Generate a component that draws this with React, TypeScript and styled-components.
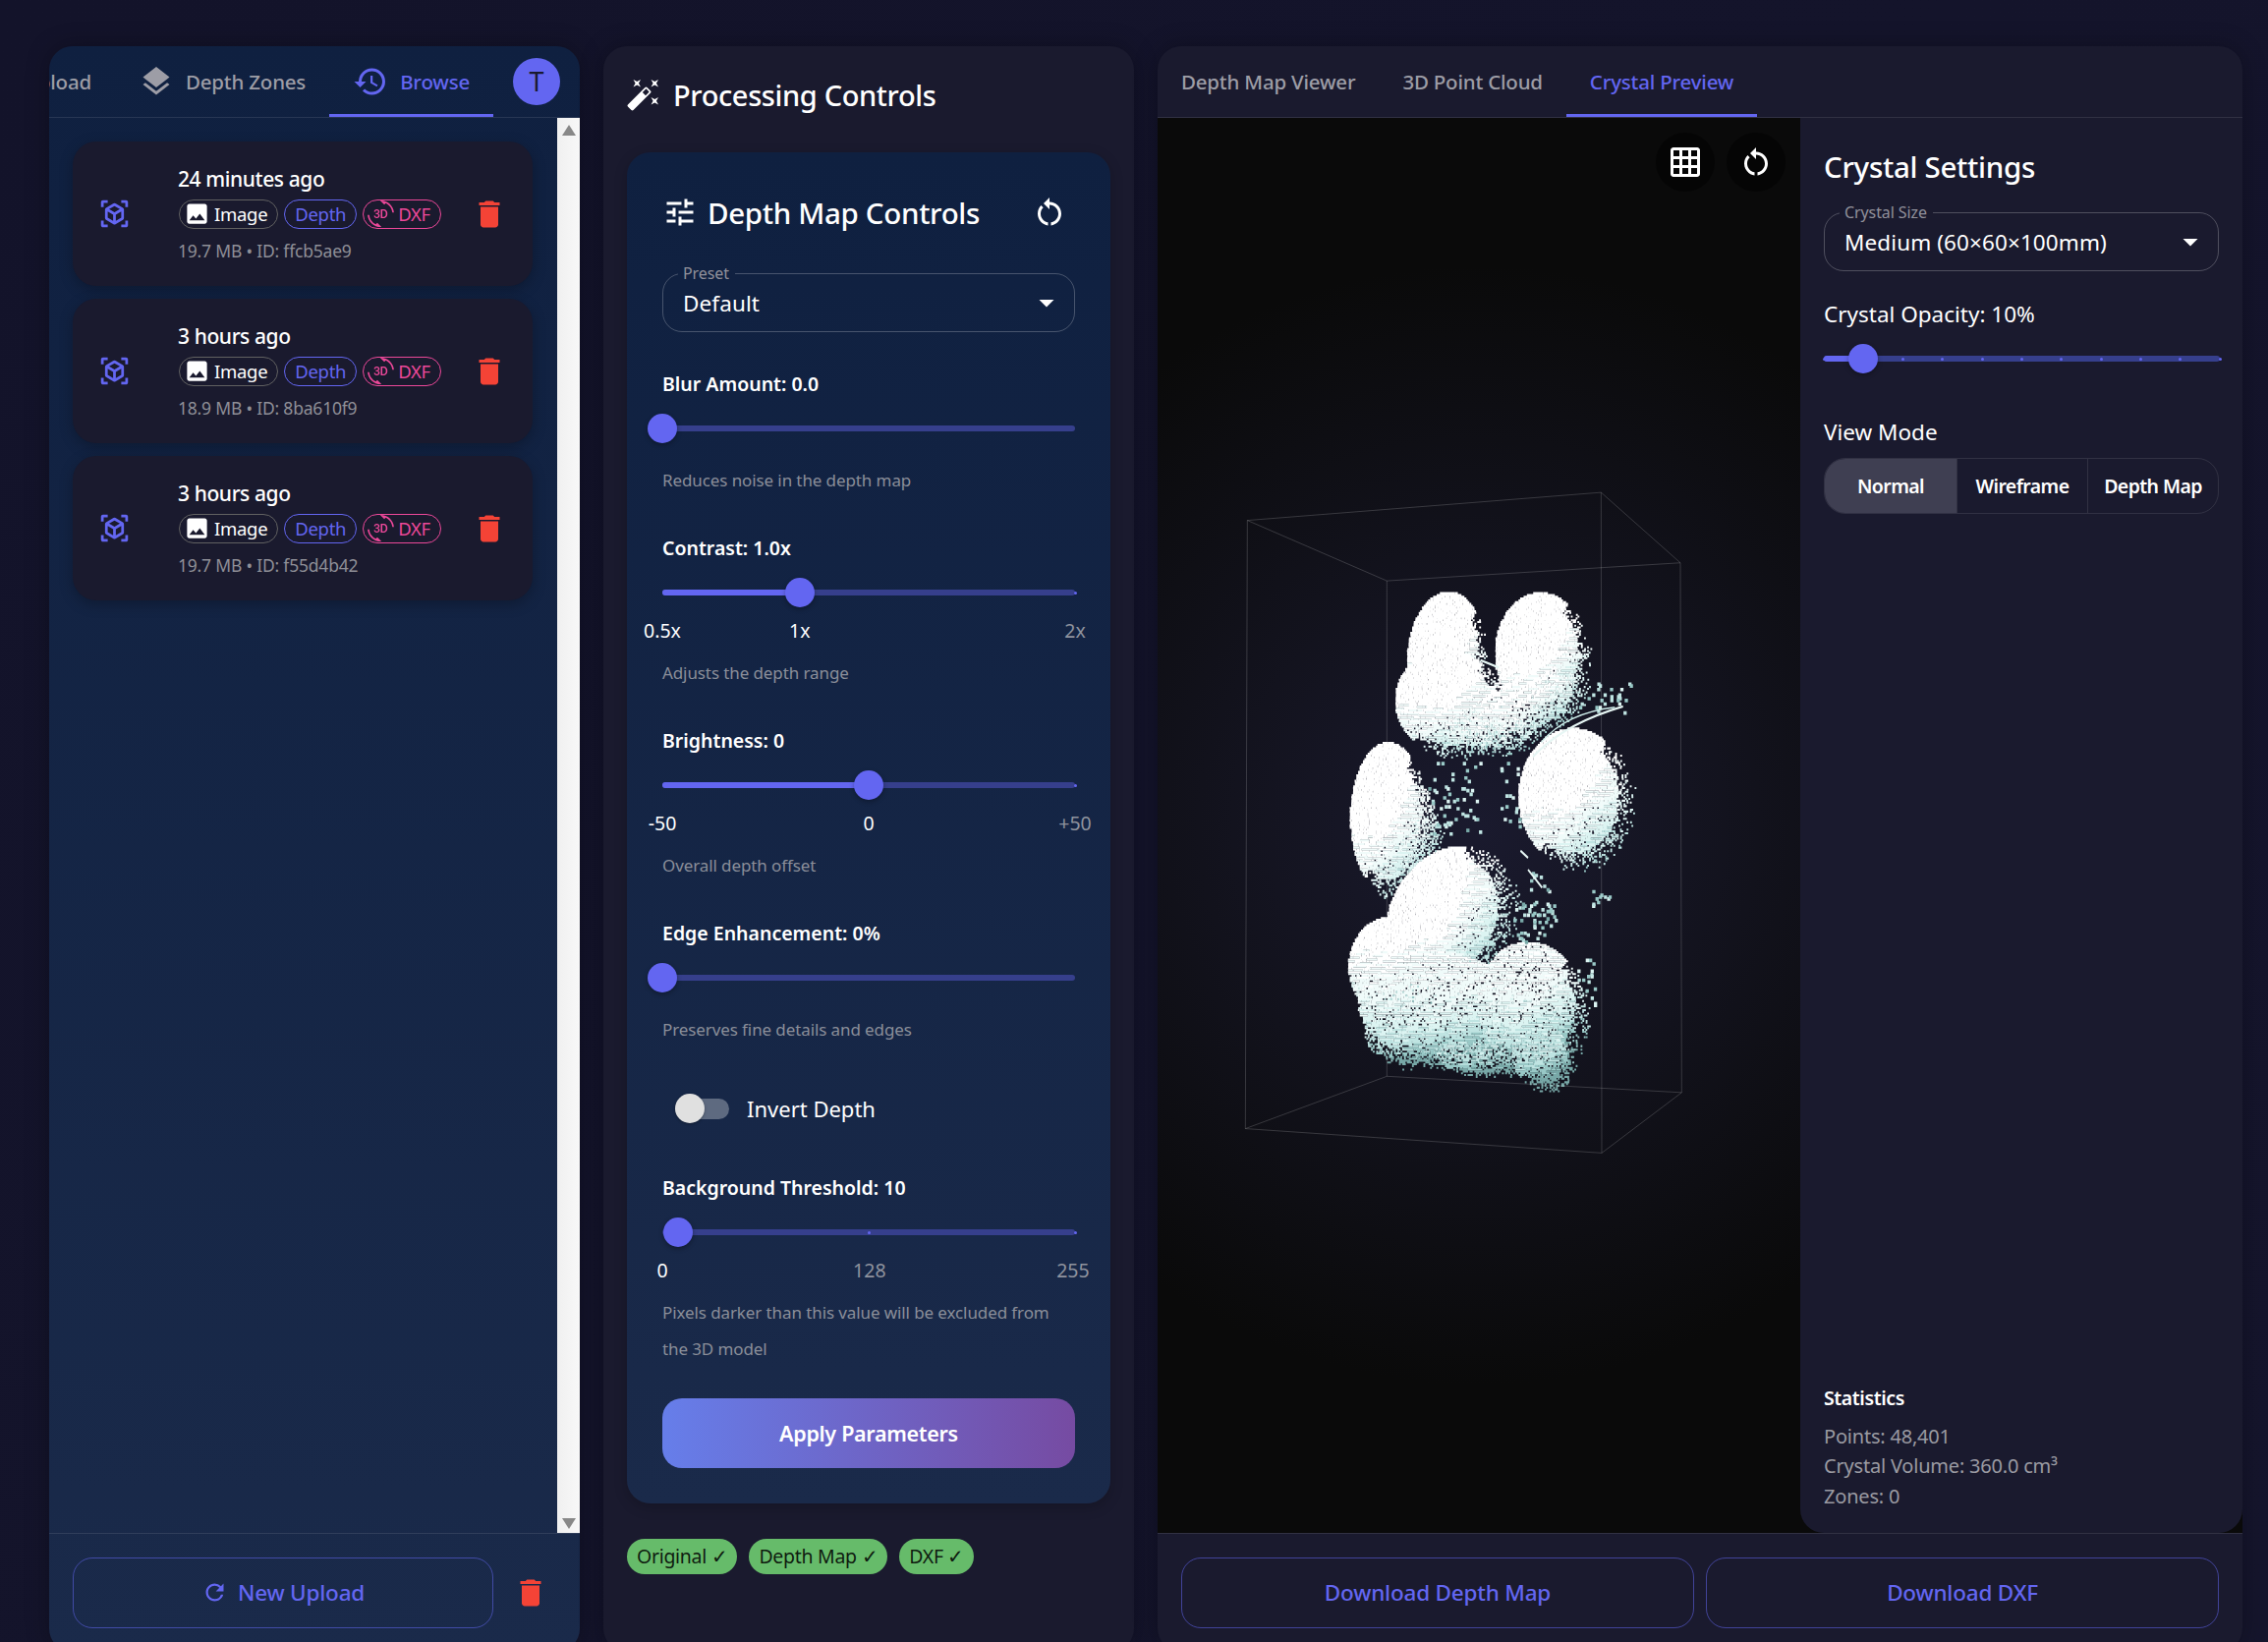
import styled, { createGlobalStyle } from 'styled-components';
import {
  Md3dRotation,
  MdArrowDropDown,
  MdAutoFixHigh,
  MdDelete,
  MdGridOn,
  MdHistory,
  MdImage,
  MdLayers,
  MdRefresh,
  MdRestartAlt,
  MdTune,
  MdViewInAr,
} from 'react-icons/md';

const GlobalStyle = createGlobalStyle`
  html, body {
    margin: 0;
    padding: 0;
    background: #14142a;
    overflow: hidden;
  }
  * {
    box-sizing: border-box;
  }
  body {
    font-family: "Noto Sans", "Open Sans", sans-serif;
    color: #fff;
  }
`;

const Page = styled.div`
  width: 2308px;
  height: 1671px;
  overflow: hidden;
  padding: 47px 26px 0 50px;
  display: flex;
  gap: 24px;
  align-items: flex-start;
  background: linear-gradient(135deg, #13132a 0%, #15152c 100%);
`;

const Panel = styled.section<{ $width: number; $navy?: boolean }>`
  width: ${(p) => p.$width}px;
  flex: none;
  height: 1634px;
  border-radius: 24px;
  overflow: hidden;
  display: flex;
  flex-direction: column;
  box-shadow: 0 0 24px rgba(0, 0, 0, 0.28);
  background: ${(p) => (p.$navy ? 'linear-gradient(180deg, #0f2040 0%, #1a2a4a 100%)' : '#1a1a2e')};
`;

const TabBar = styled.div`
  height: 73px;
  flex: none;
  display: flex;
  align-items: stretch;
  border-bottom: 1px solid rgba(255, 255, 255, 0.1);
`;

const TabStrip = styled.div<{ $end?: boolean }>`
  flex: 1;
  min-width: 0;
  display: flex;
  overflow: hidden;
  justify-content: ${(p) => (p.$end ? 'flex-end' : 'flex-start')};
`;

const Tab = styled.div<{ $active?: boolean }>`
  flex: none;
  height: 72px;
  padding: 3px 24px 0;
  display: flex;
  align-items: center;
  gap: 12px;
  font-size: 20.5px;
  font-weight: 500;
  letter-spacing: -0.2px;
  color: ${(p) => (p.$active ? '#6366f1' : '#9d9da6')};
  border-bottom: 3px solid ${(p) => (p.$active ? '#6366f1' : 'transparent')};
  svg {
    font-size: 36px;
  }
`;

const Avatar = styled.div`
  width: 48px;
  height: 48px;
  flex: none;
  margin: 12px 20px 0;
  border-radius: 50%;
  background: #6366f1;
  color: #1a1a2e;
  font-size: 27px;
  line-height: 48px;
  text-align: center;
`;

const BrowseBody = styled.div`
  flex: 1;
  min-height: 0;
  display: flex;
`;

const FileList = styled.div`
  flex: 1;
  padding: 24px 25px 0 24px;
  display: flex;
  flex-direction: column;
  gap: 13px;
`;

const FileCard = styled.div`
  height: 147px;
  flex: none;
  border-radius: 24px;
  background: #1a1a2e;
  box-shadow: 0 4px 14px rgba(0, 0, 0, 0.25);
  display: flex;
  align-items: center;
  padding: 0 26px;
`;

const FileIcon = styled(MdViewInAr)`
  flex: none;
  font-size: 33px;
  color: #6366f1;
  margin-right: 48px;
`;

const FileInfo = styled.div`
  flex: 1;
  min-width: 0;
`;

const FileTitle = styled.div`
  font-size: 21px;
  font-weight: 500;
  line-height: 30px;
  letter-spacing: -0.4px;
  margin-bottom: 6px;
`;

const ChipRow = styled.div`
  display: flex;
  gap: 6px;
  margin-left: 1px;
`;

const Chip = styled.span<{ $color: string }>`
  height: 30px;
  padding: 0 10px;
  display: inline-flex;
  align-items: center;
  gap: 4px;
  border-radius: 15px;
  font-size: 18.5px;
  letter-spacing: -0.3px;
  color: ${(p) => p.$color};
  border: 1px solid ${(p) => (p.$color === '#ffffff' ? '#616161' : p.$color)};
  svg {
    font-size: 27px;
    margin-left: -6px;
  }
`;

const FileMeta = styled.div`
  margin-top: 8px;
  font-size: 17.5px;
  line-height: 28px;
  letter-spacing: -0.2px;
  color: #8f8f97;
`;

const TrashButton = styled(MdDelete)`
  flex: none;
  font-size: 36px;
  color: #f44336;
`;

const Scrollbar = styled.div`
  width: 23px;
  flex: none;
  background: linear-gradient(90deg, #f0f0f0, #f8f8f8);
  display: flex;
  flex-direction: column;
  justify-content: space-between;
  align-items: center;
  padding: 7px 0 4px;
`;

const ScrollArrow = styled.div<{ $down?: boolean }>`
  width: 0;
  height: 0;
  border-left: 7px solid transparent;
  border-right: 7px solid transparent;
  ${(p) => (p.$down ? 'border-top: 11px solid #888;' : 'border-bottom: 11px solid #888;')}
`;

const Footer = styled.div<{ $trash?: boolean }>`
  height: 121px;
  flex: none;
  padding: 24px ${(p) => (p.$trash ? '32px' : '24px')} 25px 24px;
  border-top: 1px solid rgba(255, 255, 255, 0.1);
  display: flex;
  align-items: center;
  gap: ${(p) => (p.$trash ? '20px' : '12px')};
`;

const OutlineButton = styled.div`
  flex: 1;
  height: 72px;
  border: 1px solid rgba(99, 102, 241, 0.55);
  border-radius: 20px;
  color: #6366f1;
  font-size: 22.5px;
  font-weight: 500;
  letter-spacing: -0.2px;
  display: flex;
  align-items: center;
  justify-content: center;
  gap: 10px;
  svg {
    font-size: 27px;
  }
`;

const MiddleBody = styled.div`
  padding: 31px 24px 0;
`;

const PanelTitle = styled.h2`
  margin: 0 0 41px;
  height: 36px;
  display: flex;
  align-items: center;
  gap: 12px;
  font-size: 29px;
  font-weight: 500;
  letter-spacing: -0.37px;
  svg {
    font-size: 36px;
    margin-left: -1px;
  }
`;

const ControlsCard = styled.div`
  height: 1375px;
  border-radius: 24px;
  padding: 41px 36px 36px;
  background: linear-gradient(180deg, #0f2040 0%, #1a2a4a 100%);
  box-shadow: 0 4px 14px rgba(0, 0, 0, 0.2);
`;

const CardHeader = styled.div`
  height: 40px;
  display: flex;
  align-items: center;
  gap: 10px;
  font-size: 29.5px;
  font-weight: 500;
  letter-spacing: -0.33px;
  margin-bottom: 32px;
  svg {
    font-size: 36px;
    flex: none;
  }
`;

const HeaderSpacer = styled.span`
  flex: 1;
`;

const ResetIcon = styled(MdRestartAlt)`
  margin-right: 8px;
`;

const SelectBox = styled.fieldset`
  margin: 0;
  padding: 0 11px 9px 20px;
  border: 1px solid rgba(255, 255, 255, 0.23);
  border-radius: 20px;
  min-width: 0;
  display: flex;
  align-items: center;
  justify-content: space-between;
`;

const SelectLegend = styled.legend`
  margin-left: -5px;
  padding: 0 6px 0 5px;
  font-size: 16px;
  line-height: 20px;
  letter-spacing: -0.1px;
  color: #90909a;
`;

const SelectValue = styled.div`
  height: 40px;
  line-height: 42px;
  font-size: 22.5px;
  letter-spacing: 0.1px;
`;

const CaretIcon = styled(MdArrowDropDown)`
  font-size: 36px;
  margin-right: -1px;
`;

const ControlGroup = styled.div<{ $first?: boolean }>`
  margin-top: ${(p) => (p.$first ? '39px' : '37px')};
`;

const ControlLabel = styled.div`
  height: 28px;
  line-height: 28px;
  font-size: 19.5px;
  font-weight: 600;
  letter-spacing: 0;
`;

const SliderRoot = styled.div<{ $marked?: boolean }>`
  position: relative;
  height: 30px;
  margin-top: 16px;
  margin-bottom: ${(p) => (p.$marked ? '49px' : '20px')};
`;

const SliderRail = styled.div`
  position: absolute;
  left: 0;
  right: 0;
  top: 12px;
  height: 6px;
  border-radius: 3px;
  background: #363f8c;
`;

const SliderFill = styled.div`
  position: absolute;
  left: 0;
  top: 12px;
  height: 6px;
  border-radius: 3px;
  background: #6366f1;
`;

const SliderThumb = styled.div`
  position: absolute;
  top: 0;
  width: 30px;
  height: 30px;
  margin-left: -15px;
  border-radius: 50%;
  background: #6366f1;
  box-shadow: 0 2px 5px rgba(0, 0, 0, 0.3);
`;

const SliderDot = styled.div`
  position: absolute;
  top: 13.5px;
  width: 3px;
  height: 3px;
  margin-left: -1.5px;
  border-radius: 50%;
  background: #6366f1;
`;

const SliderMark = styled.div<{ $on?: boolean }>`
  position: absolute;
  top: 42px;
  transform: translateX(-50%);
  font-size: 19.5px;
  line-height: 24px;
  color: ${(p) => (p.$on ? '#ffffff' : '#8f939e')};
`;

const HelpText = styled.div`
  font-size: 17px;
  line-height: 36px;
  letter-spacing: -0.1px;
  color: #8a8e99;
  & + & {
    margin-top: 1px;
  }
`;

const InvertRow = styled.div`
  height: 40px;
  margin-top: 42px;
  margin-bottom: 47px;
  padding-left: 13px;
  display: flex;
  align-items: center;
  gap: 18px;
  font-size: 22px;
`;

const ToggleTrack = styled.div`
  position: relative;
  width: 55px;
  height: 21px;
  border-radius: 11px;
  background: #5e6a80;
`;

const ToggleKnob = styled.div`
  position: absolute;
  left: 0;
  top: -4.5px;
  width: 30px;
  height: 30px;
  border-radius: 50%;
  background: #e0e0e0;
  box-shadow: 0 1px 3px rgba(0, 0, 0, 0.3);
`;

const ApplyButton = styled.div`
  margin-top: 32px;
  height: 71px;
  border-radius: 20px;
  background: linear-gradient(90deg, #667eea 0%, #764ba2 100%);
  display: flex;
  align-items: center;
  justify-content: center;
  font-size: 21.5px;
  font-weight: 600;
  letter-spacing: -0.3px;
`;

const StatusRow = styled.div`
  display: flex;
  gap: 12px;
  margin-top: 36px;
`;

const StatusChip = styled.span`
  height: 36px;
  padding: 0 10px;
  border-radius: 18px;
  background: #66bb6a;
  color: rgba(0, 0, 0, 0.87);
  font-size: 19.5px;
  letter-spacing: -0.3px;
  line-height: 36px;
`;

const PreviewBody = styled.div`
  flex: 1;
  min-height: 0;
  display: flex;
  background: #0a0a0a;
`;

const Viewer = styled.div`
  position: relative;
  flex: 1;
  min-width: 0;
  background: radial-gradient(circle at center, #1a1a2e 0%, #0a0a0a 72%);
`;

const ViewerCanvas = styled.svg`
  display: block;
  width: 100%;
  height: 100%;
`;

const ViewerTools = styled.div`
  position: absolute;
  top: 15px;
  right: 15px;
  display: flex;
  gap: 12px;
`;

const ToolButton = styled.div`
  width: 60px;
  height: 60px;
  border-radius: 50%;
  background: rgba(0, 0, 0, 0.5);
  display: flex;
  align-items: center;
  justify-content: center;
  font-size: 36px;
`;

const SettingsPanel = styled.aside`
  width: 450px;
  flex: none;
  padding: 31px 24px 22px;
  background: #1a1a2e;
  border-radius: 0 0 24px 24px;
  display: flex;
  flex-direction: column;
`;

const SettingsTitle = styled.h3`
  margin: 0 0 17px;
  height: 38px;
  line-height: 38px;
  font-size: 29.5px;
  font-weight: 500;
  letter-spacing: -0.3px;
`;

const SettingsLabel = styled.div<{ $spaced?: boolean }>`
  font-size: 22.5px;
  line-height: 30px;
  margin-top: ${(p) => (p.$spaced ? '29px' : '0')};
`;

const OpacitySlider = styled(SliderRoot)`
  margin-top: 15px;
  margin-right: -1px;
  margin-bottom: 45px;
`;

const ModeGroup = styled.div`
  margin-top: 11px;
  height: 57px;
  display: flex;
  border: 1px solid rgba(255, 255, 255, 0.1);
  border-radius: 22px;
  overflow: hidden;
`;

const ModeButton = styled.div<{ $active?: boolean; $width: number }>`
  width: ${(p) => p.$width}px;
  flex: none;
  display: flex;
  align-items: center;
  justify-content: center;
  font-size: 19.5px;
  font-weight: 600;
  letter-spacing: -0.6px;
  background: ${(p) => (p.$active ? '#3f3f52' : 'transparent')};
  & + & {
    border-left: 1px solid rgba(255, 255, 255, 0.1);
  }
`;

const Statistics = styled.div`
  margin-top: auto;
`;

const StatsTitle = styled.div`
  font-size: 19.5px;
  font-weight: 600;
  line-height: 28px;
  letter-spacing: -0.4px;
  margin-bottom: 10px;
`;

const StatsLine = styled.div`
  font-size: 20px;
  line-height: 30.5px;
  letter-spacing: -0.2px;
  color: #9a9aa2;
`;

// seeded random so the point cloud comes out the same on every render
function makeRandom(seed: number) {
  let a = seed;
  return () => {
    a = (a + 0x6d2b79f5) | 0;
    let t = Math.imul(a ^ (a >>> 15), 1 | a);
    t = (t + Math.imul(t ^ (t >>> 7), 61 | t)) ^ t;
    return ((t ^ (t >>> 14)) >>> 0) / 4294967296;
  };
}

// measured in the crop of the paw: x is 3 units per pixel, y about 2.18
const lobes = [
  { x: 690, y: 400, rx: 115, ry: 138, rot: 14, dark: 0, fill: 1 },
  { x: 700, y: 510, rx: 165, ry: 115, rot: 4, dark: 0.14, fill: 1 },
  { x: 790, y: 545, rx: 110, ry: 75, rot: 0, dark: 0.28, fill: 0.75 },
  { x: 980, y: 400, rx: 140, ry: 135, rot: 0, dark: 0, fill: 1 },
  { x: 950, y: 505, rx: 155, ry: 72, rot: -8, dark: 0.2, fill: 0.85 },
  { x: 870, y: 565, rx: 105, ry: 60, rot: 0, dark: 0.3, fill: 0.6 },
  { x: 515, y: 765, rx: 116, ry: 168, rot: 0, dark: 0.05, fill: 1 },
  { x: 605, y: 800, rx: 70, ry: 105, rot: 0, dark: 0.4, fill: 0.55 },
  { x: 1080, y: 718, rx: 168, ry: 152, rot: 0, dark: 0.08, fill: 1 },
  { x: 695, y: 985, rx: 195, ry: 148, rot: -24, dark: 0.08, fill: 1 },
  { x: 525, y: 1095, rx: 132, ry: 112, rot: 0, dark: 0.1, fill: 1 },
  { x: 690, y: 1190, rx: 270, ry: 125, rot: 5, dark: 0.22, fill: 0.97 },
  { x: 950, y: 1180, rx: 165, ry: 140, rot: 8, dark: 0.2, fill: 0.95 },
  { x: 560, y: 1255, rx: 120, ry: 65, rot: 10, dark: 0.45, fill: 0.6 },
  { x: 985, y: 1295, rx: 95, ry: 72, rot: 10, dark: 0.5, fill: 0.85 },
  { x: 790, y: 1300, rx: 140, ry: 38, rot: 5, dark: 0.55, fill: 0.7 },
];

const sprinkles = [
  { x0: 640, x1: 800, y0: 640, y1: 800, p: 0.06 },
  { x0: 1090, x1: 1260, y0: 465, y1: 535, p: 0.05 },
  { x0: 900, x1: 1030, y0: 950, y1: 1040, p: 0.09 },
  { x0: 1140, x1: 1195, y0: 925, y1: 960, p: 0.1 },
  { x0: 1070, x1: 1160, y0: 1065, y1: 1180, p: 0.03 },
  { x0: 860, x1: 960, y0: 640, y1: 790, p: 0.03 },
  { x0: 940, x1: 1030, y0: 880, y1: 930, p: 0.05 },
];

const cloudColors = ['#ffffff', '#f0fbfa', '#dcf4f2', '#bfe4e2', '#98c8c6', '#78a8a7'];

function buildCloud(): string[] {
  const rand = makeRandom(4821);
  const paths: string[] = cloudColors.map(() => '');
  const stepX = 5;
  const stepY = 4;
  for (let y = 255; y < 1385; y += stepY) {
    for (let x = 385; x < 1285; x += stepX) {
      let keep = false;
      let shade = 1;
      for (const l of lobes) {
        const r = (l.rot * Math.PI) / 180;
        const dx = ((x - l.x) * Math.cos(r) + (y - l.y) * Math.sin(r)) / l.rx;
        const dy = (-(x - l.x) * Math.sin(r) + (y - l.y) * Math.cos(r)) / l.ry;
        const d = Math.hypot(dx, dy);
        if (d > 1.3) continue;
        const facing = d === 0 ? 0 : (dx * 0.8 + dy * 0.6) / d;
        const limit = facing < 0 ? 1 : 1 + 0.22 * facing;
        const core = facing < 0 ? 1 : 0.82;
        let prob = 0;
        if (d <= core) prob = l.fill;
        else if (d < limit) prob = 0.55 * l.fill * (1 - (d - core) / (limit - core));
        if (rand() < prob) {
          keep = true;
          const s = l.dark * 0.6 + Math.max(0, dy) * 0.32 + Math.max(0, facing) * d * 0.42;
          shade = Math.min(shade, s);
        }
      }
      let w = 5.6;
      let h = 4.5;
      if (!keep) {
        for (const s of sprinkles) {
          if (x >= s.x0 && x < s.x1 && y >= s.y0 && y < s.y1 && rand() < s.p) {
            keep = true;
            shade = 0.5 + rand() * 0.5;
            w = 10;
            h = 8;
          }
        }
      } else {
        if (y > 1020) shade += ((y - 1020) / 360) * 0.45;
        if (shade > 0.22 && rand() < 0.05) continue;
      }
      if (!keep) continue;
      // horizontal ripple from the scan lines
      const ripple = Math.sin(y * 0.9 + x * 0.05) * 0.1;
      const bucket = Math.min(cloudColors.length - 1, Math.max(0, Math.floor((shade + ripple) * 5)));
      const px = x + rand() * 1.6;
      paths[bucket] += `M${px.toFixed(1)} ${y}h${w}v${h}h-${w}z`;
    }
  }
  return paths;
}

const cloudPaths = buildCloud();

const boxEdges = [
  [88, 108, 1168, 46],
  [1168, 46, 1410, 202],
  [1410, 202, 514, 242],
  [514, 242, 88, 108],
  [82, 1456, 514, 1340],
  [514, 1340, 1414, 1376],
  [1414, 1376, 1170, 1510],
  [1170, 1510, 82, 1456],
  [88, 108, 82, 1456],
  [514, 242, 514, 1340],
  [1168, 46, 1170, 1510],
  [1410, 202, 1414, 1376],
];

function CrystalCanvas() {
  return (
    <ViewerCanvas viewBox="0 0 654 1440">
      <g transform="translate(62 360) scale(0.33333 0.45918)">
        {cloudPaths.map((d, i) => (
          <path key={cloudColors[i]} d={d} fill={cloudColors[i]} />
        ))}
        <path d="M960 632Q1050 560 1235 520" fill="none" stroke="#e6f6f4" strokeWidth="5" />
        <path d="M985 600Q1060 535 1210 522" fill="none" stroke="#cfeeeb" strokeWidth="3" />
        <path d="M800 418L856 434M945 882L988 922M922 840L945 856" fill="none" stroke="#e6f6f4" strokeWidth="5" />
        {boxEdges.map((e) => (
          <line
            key={e.join('-')}
            x1={e[0]}
            y1={e[1]}
            x2={e[2]}
            y2={e[3]}
            stroke="rgba(255,255,255,0.17)"
            strokeWidth="1"
            vectorEffect="non-scaling-stroke"
          />
        ))}
      </g>
    </ViewerCanvas>
  );
}

type SliderProps = {
  label: string;
  value: number;
  help: string[];
  fill?: boolean;
  marks?: { at: number; text: string }[];
  first?: boolean;
  dots?: number[];
};

function DepthSlider({ label, value, help, fill, marks, first, dots }: SliderProps) {
  return (
    <ControlGroup $first={first}>
      <ControlLabel>{label}</ControlLabel>
      <SliderRoot $marked={!!marks}>
        <SliderRail />
        {fill && <SliderFill style={{ width: `${value}%` }} />}
        {(dots || []).map((d) => (
          <SliderDot key={d} style={{ left: `${d}%` }} />
        ))}
        <SliderThumb style={{ left: `${value}%` }} />
        {marks &&
          marks.map((m) => (
            <SliderMark key={m.text} $on={m.at <= value} style={{ left: `${m.at}%` }}>
              {m.text}
            </SliderMark>
          ))}
      </SliderRoot>
      {help.map((line) => (
        <HelpText key={line}>{line}</HelpText>
      ))}
    </ControlGroup>
  );
}

const files = [
  { when: '24 minutes ago', meta: '19.7 MB • ID: ffcb5ae9' },
  { when: '3 hours ago', meta: '18.9 MB • ID: 8ba610f9' },
  { when: '3 hours ago', meta: '19.7 MB • ID: f55d4b42' },
];

export default function App() {
  return (
    <Page>
      <GlobalStyle />

      <Panel $width={540} $navy>
        <TabBar>
          <TabStrip $end>
            <Tab>Upload</Tab>
            <Tab>
              <MdLayers />
              Depth Zones
            </Tab>
            <Tab $active>
              <MdHistory />
              Browse
            </Tab>
          </TabStrip>
          <Avatar>T</Avatar>
        </TabBar>
        <BrowseBody>
          <FileList>
            {files.map((f) => (
              <FileCard key={f.meta}>
                <FileIcon />
                <FileInfo>
                  <FileTitle>{f.when}</FileTitle>
                  <ChipRow>
                    <Chip $color="#ffffff">
                      <MdImage />
                      Image
                    </Chip>
                    <Chip $color="#6366f1">Depth</Chip>
                    <Chip $color="#ec4899">
                      <Md3dRotation />
                      DXF
                    </Chip>
                  </ChipRow>
                  <FileMeta>{f.meta}</FileMeta>
                </FileInfo>
                <TrashButton />
              </FileCard>
            ))}
          </FileList>
          <Scrollbar>
            <ScrollArrow />
            <ScrollArrow $down />
          </Scrollbar>
        </BrowseBody>
        <Footer $trash>
          <OutlineButton>
            <MdRefresh />
            New Upload
          </OutlineButton>
          <TrashButton />
        </Footer>
      </Panel>

      <Panel $width={540}>
        <MiddleBody>
          <PanelTitle>
            <MdAutoFixHigh />
            Processing Controls
          </PanelTitle>
          <ControlsCard>
            <CardHeader>
              <MdTune />
              Depth Map Controls
              <HeaderSpacer />
              <ResetIcon />
            </CardHeader>
            <SelectBox>
              <SelectLegend>Preset</SelectLegend>
              <SelectValue>Default</SelectValue>
              <CaretIcon />
            </SelectBox>
            <DepthSlider first label="Blur Amount: 0.0" value={0} help={['Reduces noise in the depth map']} />
            <DepthSlider
              label="Contrast: 1.0x"
              value={33.3}
              fill
              dots={[100]}
              help={['Adjusts the depth range']}
              marks={[
                { at: 0, text: '0.5x' },
                { at: 33.3, text: '1x' },
                { at: 100, text: '2x' },
              ]}
            />
            <DepthSlider
              label="Brightness: 0"
              value={50}
              fill
              dots={[100]}
              help={['Overall depth offset']}
              marks={[
                { at: 0, text: '-50' },
                { at: 50, text: '0' },
                { at: 100, text: '+50' },
              ]}
            />
            <DepthSlider label="Edge Enhancement: 0%" value={0} help={['Preserves fine details and edges']} />
            <InvertRow>
              <ToggleTrack>
                <ToggleKnob />
              </ToggleTrack>
              Invert Depth
            </InvertRow>
            <ControlLabel>Background Threshold: 10</ControlLabel>
            <SliderRoot $marked>
              <SliderRail />
              <SliderDot style={{ left: '50.2%' }} />
              <SliderDot style={{ left: '100%' }} />
              <SliderThumb style={{ left: '3.9%' }} />
              <SliderMark $on style={{ left: '0%' }}>
                0
              </SliderMark>
              <SliderMark style={{ left: '50.2%' }}>128</SliderMark>
              <SliderMark style={{ left: '99.5%' }}>255</SliderMark>
            </SliderRoot>
            <HelpText>Pixels darker than this value will be excluded from</HelpText>
            <HelpText>the 3D model</HelpText>
            <ApplyButton>Apply Parameters</ApplyButton>
          </ControlsCard>
          <StatusRow>
            <StatusChip>Original ✓</StatusChip>
            <StatusChip>Depth Map ✓</StatusChip>
            <StatusChip>DXF ✓</StatusChip>
          </StatusRow>
        </MiddleBody>
      </Panel>

      <Panel $width={1104}>
        <TabBar>
          <TabStrip>
            <Tab>Depth Map Viewer</Tab>
            <Tab>3D Point Cloud</Tab>
            <Tab $active>Crystal Preview</Tab>
          </TabStrip>
        </TabBar>
        <PreviewBody>
          <Viewer>
            <CrystalCanvas />
            <ViewerTools>
              <ToolButton>
                <MdGridOn />
              </ToolButton>
              <ToolButton>
                <MdRestartAlt />
              </ToolButton>
            </ViewerTools>
          </Viewer>
          <SettingsPanel>
            <SettingsTitle>Crystal Settings</SettingsTitle>
            <SelectBox>
              <SelectLegend>Crystal Size</SelectLegend>
              <SelectValue>Medium (60×60×100mm)</SelectValue>
              <CaretIcon />
            </SelectBox>
            <SettingsLabel $spaced>Crystal Opacity: 10%</SettingsLabel>
            <OpacitySlider>
              <SliderRail />
              <SliderFill style={{ width: '10%' }} />
              {[0, 20, 30, 40, 50, 60, 70, 80, 90, 100].map((d) => (
                <SliderDot key={d} style={{ left: `${d}%` }} />
              ))}
              <SliderThumb style={{ left: '10%' }} />
            </OpacitySlider>
            <SettingsLabel>View Mode</SettingsLabel>
            <ModeGroup>
              <ModeButton $active $width={134}>
                Normal
              </ModeButton>
              <ModeButton $width={133}>Wireframe</ModeButton>
              <ModeButton $width={133}>Depth Map</ModeButton>
            </ModeGroup>
            <Statistics>
              <StatsTitle>Statistics</StatsTitle>
              <StatsLine>Points: 48,401</StatsLine>
              <StatsLine>Crystal Volume: 360.0 cm³</StatsLine>
              <StatsLine>Zones: 0</StatsLine>
            </Statistics>
          </SettingsPanel>
        </PreviewBody>
        <Footer>
          <OutlineButton>Download Depth Map</OutlineButton>
          <OutlineButton>Download DXF</OutlineButton>
        </Footer>
      </Panel>
    </Page>
  );
}
